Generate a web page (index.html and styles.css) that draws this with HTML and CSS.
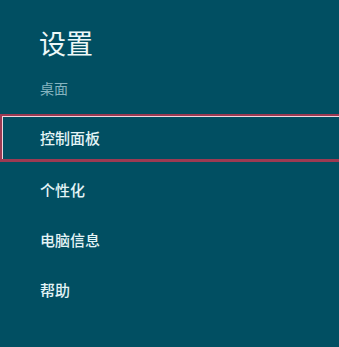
FILE: index.html
```html
<!DOCTYPE html>
<html lang="zh">
<head>
<meta charset="utf-8">
<link rel="stylesheet" href="styles.css">
</head>
<body>
<div class="panel">
  <h1 class="title">设置</h1>
  <div class="section">桌面</div>
  <ul class="menu">
    <li class="item selected">控制面板</li>
    <li class="item">个性化</li>
    <li class="item">电脑信息</li>
    <li class="item">帮助</li>
  </ul>
</div>
</body>
</html>
```
FILE: styles.css
```css
html, body {
  margin: 0;
  padding: 0;
  background: #014f62;
  width: 339px;
  height: 347px;
  overflow: hidden;
  font-family: "Noto Sans CJK SC", "Noto Sans", sans-serif;
}
.panel {
  padding-top: 25px;
}
.title {
  margin: 0 0 0 39px;
  font-size: 27px;
  font-weight: 400;
  line-height: 36px;
  color: #eef8f8;
}
.section {
  margin: 17px 0 0 40px;
  font-size: 14px;
  line-height: 20px;
  color: #86b4c0;
}
.menu {
  list-style: none;
  margin: 16px 0 0 0;
  padding: 0;
}
.item {
  height: 50px;
  box-sizing: border-box;
  padding-left: 40px;
  display: flex;
  align-items: center;
  font-size: 15px;
  font-weight: 500;
  color: #e4f4f6;
}
.selected {
  height: 48px;
  margin-bottom: 2px;
  border: 2px solid #9c3a52;
  border-bottom-width: 3px;
  border-right-width: 0;
  box-shadow: inset 1px 1px 0 #f2d6de;
  padding-left: 38px;
}
```
